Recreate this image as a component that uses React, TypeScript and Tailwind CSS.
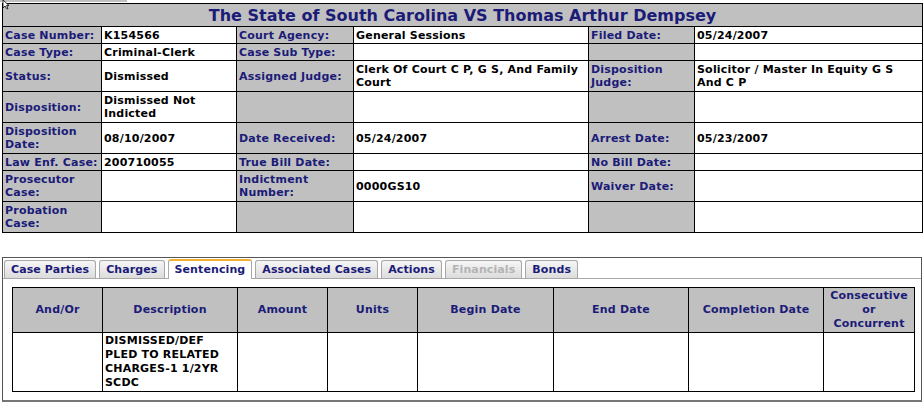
import React from 'react';

const label = 'bg-[#c0c0c0] text-[#1b1b78] font-bold border border-black px-[2px] align-middle text-left';
const value = 'bg-white text-black font-bold border border-black px-[2px] align-middle text-left';

type Cell = [string, string];

const rows: { h: string; cells: Cell[] }[] = [
  { h: 'h-[17px]', cells: [['Case Number:', 'K154566'], ['Court Agency:', 'General Sessions'], ['Filed Date:', '05/24/2007']] },
  { h: 'h-[17px]', cells: [['Case Type:', 'Criminal-Clerk'], ['Case Sub Type:', ''], ['', '']] },
  { h: 'h-[31px]', cells: [['Status:', 'Dismissed'], ['Assigned Judge:', 'Clerk Of Court C P, G S, And Family Court'], ['Disposition Judge:', 'Solicitor / Master In Equity G S And C P']] },
  { h: 'h-[31px]', cells: [['Disposition:', 'Dismissed Not Indicted'], ['', ''], ['', '']] },
  { h: 'h-[31px]', cells: [['Disposition Date:', '08/10/2007'], ['Date Received:', '05/24/2007'], ['Arrest Date:', '05/23/2007']] },
  { h: 'h-[17px]', cells: [['Law Enf. Case:', '200710055'], ['True Bill Date:', ''], ['No Bill Date:', '']] },
  { h: 'h-[31px]', cells: [['Prosecutor Case:', ''], ['Indictment Number:', '0000GS10'], ['Waiver Date:', '']] },
  { h: 'h-[31px]', cells: [['Probation Case:', ''], ['', ''], ['', '']] },
];

const tabs = ['Case Parties', 'Charges', 'Sentencing', 'Associated Cases', 'Actions', 'Financials', 'Bonds'];

const headers = ['And/Or', 'Description', 'Amount', 'Units', 'Begin Date', 'End Date', 'Completion Date', 'Consecutive or Concurrent'];
const colW = ['w-[90px]', 'w-[135px]', 'w-[90px]', 'w-[90px]', 'w-[136px]', 'w-[135px]', 'w-[135px]', 'w-[91px]'];

const App: React.FC = () => {
  return (
    <div className="relative w-[924px] h-[409px] bg-white overflow-hidden font-['DejaVu_Sans',Verdana,sans-serif] text-[11px] leading-[13px] tracking-[0.2px]">
      {/* cursor artifact */}
      <svg className="absolute left-0 top-0" width="12" height="10" viewBox="0 0 12 10">
        <path d="M3 0 L3 8 L5 6 L7 9 L8 8.5 L6.5 5.5 L9 5.5 Z" fill="white" stroke="black" strokeWidth="0.8" />
      </svg>
      <div className="h-[3px] flex">
        <div className="w-[127px] h-[2px] bg-[#c0c0c0]" />
      </div>

      {/* Case header table */}
      <table className="ml-[2px] w-[920px] border-collapse table-fixed border border-black">
        <colgroup>
          <col className="w-[99px]" />
          <col className="w-[135px]" />
          <col className="w-[117px]" />
          <col className="w-[235px]" />
          <col className="w-[106px]" />
          <col className="w-[228px]" />
        </colgroup>
        <tbody>
          <tr className="h-[23px]">
            <td colSpan={6} className="bg-[#c0c0c0] border border-black text-center text-[#1b1b78] font-bold text-[16px] tracking-normal leading-[20px] pt-[2px]">
              The State of South Carolina VS Thomas Arthur Dempsey
            </td>
          </tr>
          {rows.map((r, i) => (
            <tr key={i} className={r.h}>
              {r.cells.map(([l, v], j) => (
                <React.Fragment key={j}>
                  <td className={label}>{l}</td>
                  <td className={value}>{v}</td>
                </React.Fragment>
              ))}
            </tr>
          ))}
        </tbody>
      </table>

      {/* Tabbed panel */}
      <div className="mt-[24px] ml-[2px] w-[920px] h-[145px] border border-[#555] border-b-2 border-b-[#777] pt-[2px]">
        <div className="flex items-end gap-[3px] pl-[1px] h-[19px] border-b border-[#a8a8a8] tracking-[0.1px]">
          {tabs.map((t) => {
            const active = t === 'Sentencing';
            const disabled = t === 'Financials';
            return (
              <div
                key={t}
                className={
                  active
                    ? 'h-[20px] -mb-[1px] px-[6px] bg-white border border-[#a8a8a8] border-b-0 border-t-2 border-t-[#f0b030] rounded-t-[3px] font-bold text-[#1b1b78] leading-[17px]'
                    : 'h-[18px] px-[6px] bg-gradient-to-b from-[#f6f6f6] to-[#dcdcdc] border border-[#a8a8a8] border-b-0 rounded-t-[3px] font-bold leading-[17px] ' +
                      (disabled ? 'text-[#b4b4b4]' : 'text-[#1b1b78]')
                }
              >
                {t}
              </div>
            );
          })}
        </div>
        <table className="mt-[8px] ml-[9px] w-[902px] border-collapse table-fixed border border-black leading-[14px]">
          <colgroup>
            {colW.map((w, i) => (
              <col key={i} className={w} />
            ))}
          </colgroup>
          <thead>
            <tr className="h-[45px]">
              {headers.map((h) => (
                <th key={h} className="bg-[#c0c0c0] border border-black text-[#1b1b78] font-bold text-center align-middle px-[2px]">
                  {h === 'Consecutive or Concurrent' ? (
                    <>
                      Consecutive
                      <br />
                      or
                      <br />
                      Concurrent
                    </>
                  ) : (
                    h
                  )}
                </th>
              ))}
            </tr>
          </thead>
          <tbody>
            <tr className="h-[59px]">
              {headers.map((h, i) => (
                <td key={h} className="border border-black font-bold text-black align-top px-[2px] pt-[1px] text-left">
                  {i === 1 ? 'DISMISSED/DEF PLED TO RELATED CHARGES-1 1/2YR SCDC' : ''}
                </td>
              ))}
            </tr>
          </tbody>
        </table>
      </div>
    </div>
  );
};

export default App;
